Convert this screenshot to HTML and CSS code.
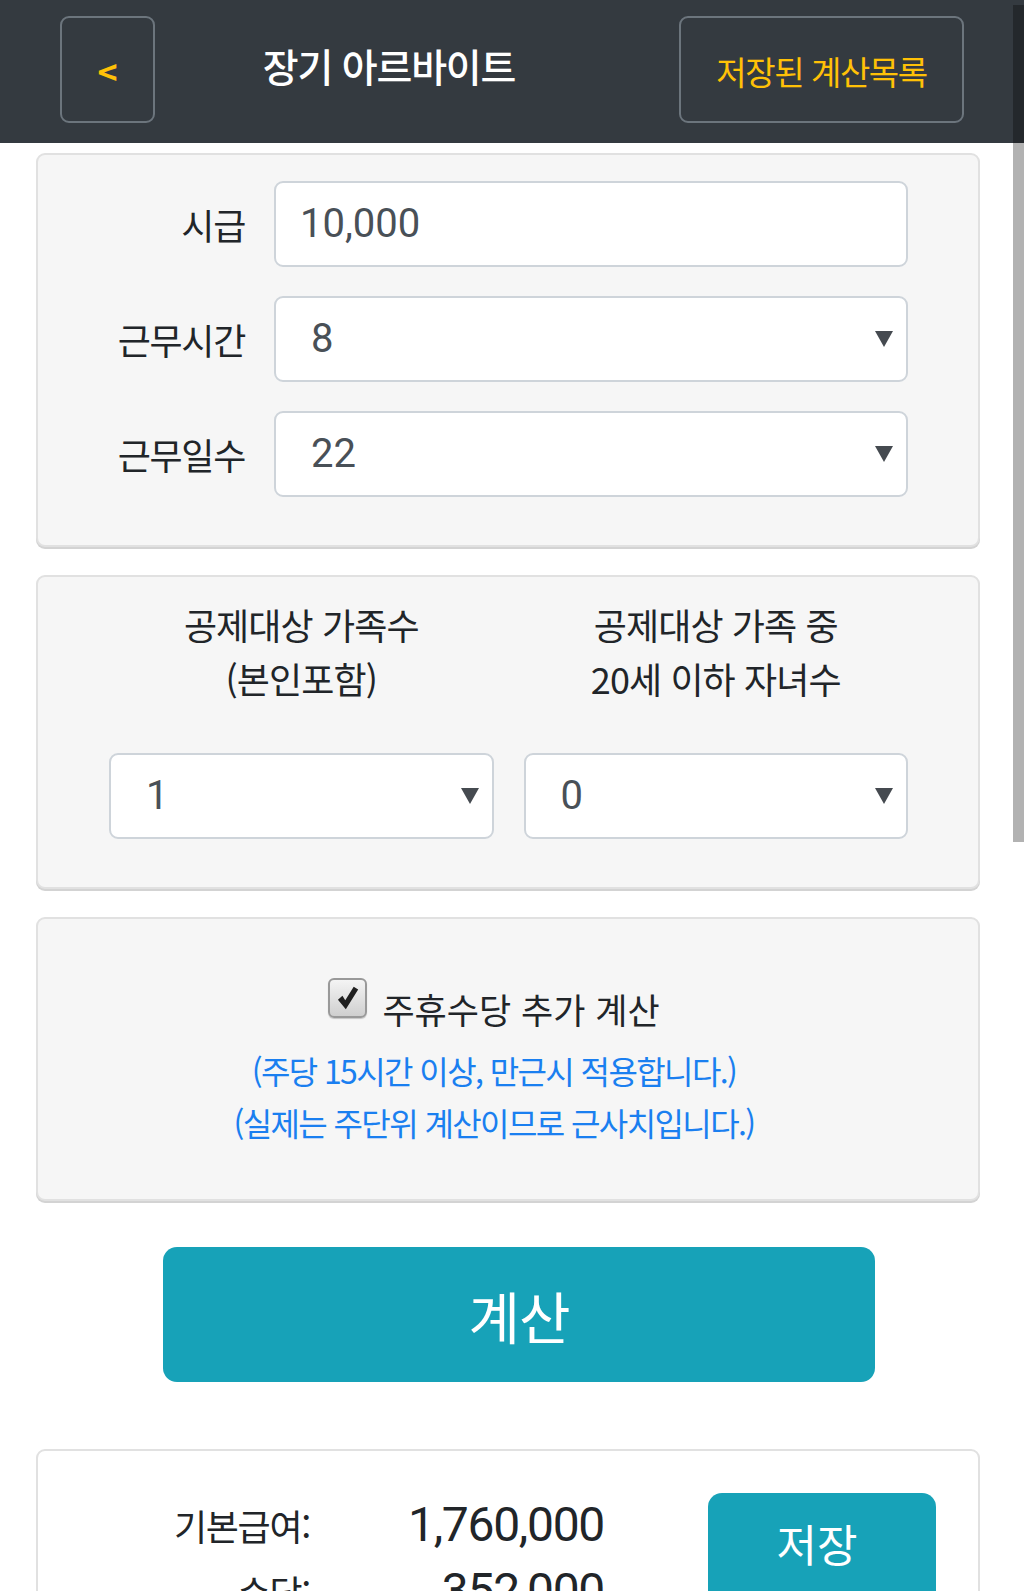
FILE: index.html
```html
<!DOCTYPE html>
<html lang="ko">
<head>
<meta charset="utf-8">
<title>장기 아르바이트</title>
<link rel="stylesheet" href="styles.css">
</head>
<body>
<header class="topbar">
  <div class="back-btn">&lt;</div>
  <h1 class="title">장기 아르바이트</h1>
  <div class="saved-btn">저장된 계산목록</div>
</header>

<main class="content">
  <section class="card card-form">
    <div class="form-row">
      <div class="form-label">시급</div>
      <div class="field field-input">10,000</div>
    </div>
    <div class="form-row">
      <div class="form-label">근무시간</div>
      <div class="field field-select"><span>8</span><svg class="caret" viewBox="0 0 18 16"><polygon points="0,0 18,0 9,16"/></svg></div>
    </div>
    <div class="form-row">
      <div class="form-label">근무일수</div>
      <div class="field field-select"><span>22</span><svg class="caret" viewBox="0 0 18 16"><polygon points="0,0 18,0 9,16"/></svg></div>
    </div>
  </section>

  <section class="card card-family">
    <div class="family-col">
      <div class="family-label">공제대상 가족수<br>(본인포함)</div>
      <div class="field field-select"><span>1</span><svg class="caret" viewBox="0 0 18 16"><polygon points="0,0 18,0 9,16"/></svg></div>
    </div>
    <div class="family-col">
      <div class="family-label">공제대상 가족 중<br>20세 이하 자녀수</div>
      <div class="field field-select"><span>0</span><svg class="caret" viewBox="0 0 18 16"><polygon points="0,0 18,0 9,16"/></svg></div>
    </div>
  </section>

  <section class="card card-holiday">
    <div class="check-row">
      <span class="checkbox"><svg viewBox="0 0 24 24"><path d="M3.5 13 L7.5 9.5 L10 13.5 L17.5 1.5 L21.5 4 L10.5 21.5 Z"/></svg></span>
      <span class="check-label">주휴수당 추가 계산</span>
    </div>
    <p class="note">(주당 15시간 이상, 만근시 적용합니다.)</p>
    <p class="note">(실제는 주단위 계산이므로 근사치입니다.)</p>
  </section>

  <div class="calc-btn">계산</div>

  <section class="card card-result">
    <div class="result-list">
      <div class="result-row">
        <div class="result-label">기본급여:</div>
        <div class="result-value">1,760,000</div>
      </div>
      <div class="result-row">
        <div class="result-label">수당:</div>
        <div class="result-value">352,000</div>
      </div>
    </div>
    <div class="save-btn">저장</div>
  </section>
</main>

<div class="scrollbar"></div>
</body>
</html>
```

FILE: styles.css
```css
* {
  box-sizing: border-box;
}

html,
body {
  margin: 0;
  padding: 0;
}

body {
  width: 1024px;
  height: 1591px;
  overflow: hidden;
  position: relative;
  background: #ffffff;
  color: #212529;
  font-family: Roboto, "Noto Sans CJK KR", sans-serif;
}

/* ---------- header ---------- */
.topbar {
  display: flex;
  align-items: flex-start;
  height: 143px;
  padding: 16px 60px 0;
  background: #343a40;
}

.back-btn {
  display: flex;
  align-items: center;
  justify-content: center;
  width: 95px;
  height: 107px;
  border: 2px solid #6c757d;
  border-radius: 9px;
  color: #ffc107;
  font: 700 34px/1 "Noto Sans CJK KR", sans-serif;
  padding-top: 2px;
}

.title {
  width: 468px;
  margin: 0;
  text-align: center;
  color: #ffffff;
  font: 500 39px/98px "Noto Sans CJK KR", sans-serif;
  letter-spacing: -1.2px;
}

.saved-btn {
  display: flex;
  align-items: center;
  justify-content: center;
  margin-left: auto;
  width: 285px;
  height: 107px;
  padding-top: 4px;
  border: 2px solid #6c757d;
  border-radius: 9px;
  color: #ffc107;
  font: 400 33px/1 "Noto Sans CJK KR", sans-serif;
  letter-spacing: -1.4px;
}

/* ---------- layout ---------- */
.content {
  padding: 10px 44px 0 36px;
}

.card {
  background: #f6f6f6;
  border: 2px solid #e1e1e1;
  border-radius: 9px;
  box-shadow: 0 2px 0 #d3d3d3;
  margin-bottom: 28px;
}

/* ---------- fields ---------- */
.field {
  display: flex;
  align-items: center;
  justify-content: space-between;
  height: 86px;
  background: #ffffff;
  border: 2px solid #ced4da;
  border-radius: 9px;
  color: #495057;
  font: 400 40px/1 Roboto, "Noto Sans CJK KR", sans-serif;
}

.field-input {
  padding: 0 13px 0 24px;
}

.field-select {
  padding: 0 13px 0 35px;
}

.caret {
  width: 18px;
  height: 16px;
  fill: #454a50;
}

/* ---------- card 1 ---------- */
.card-form {
  display: flex;
  flex-direction: column;
  gap: 29px;
  padding: 26px 70px 48px 71px;
}

.form-row {
  display: grid;
  grid-template-columns: 136px 634px;
  column-gap: 29px;
  align-items: center;
}

.form-label {
  text-align: right;
  padding-right: 0;
  font: 400 36px/1 "Noto Sans CJK KR", sans-serif;
  letter-spacing: -1.3px;
  color: #212529;
}

/* ---------- card 2 ---------- */
.card-family {
  display: grid;
  grid-template-columns: 1fr 1fr;
  column-gap: 30px;
  padding: 20px 70px 48px 71px;
}

.family-col {
  display: flex;
  flex-direction: column;
}

.family-label {
  margin-bottom: 48px;
  text-align: center;
  font: 400 36px/54px "Noto Sans CJK KR", sans-serif;
  letter-spacing: -0.9px;
}

/* ---------- card 3 ---------- */
.card-holiday {
  padding: 56px 28px 51px 0;
  text-align: center;
}

.check-row {
  display: flex;
  justify-content: center;
  align-items: flex-start;
  gap: 15px;
  height: 56px;
}

.checkbox {
  display: flex;
  align-items: center;
  justify-content: center;
  width: 39px;
  height: 40px;
  margin-top: 3px;
  border: 2px solid #999999;
  border-radius: 6px;
  background: linear-gradient(#f4f4f4, #cfcfcf);
  box-shadow: 0 1px 1px rgba(0, 0, 0, 0.2);
}

.checkbox svg {
  width: 27px;
  height: 29px;
  fill: #1f1f1f;
}

.check-label {
  padding-top: 6px;
  font: 400 35px/56px "Noto Sans CJK KR", sans-serif;
  letter-spacing: 0;
  color: #212529;
}

.note {
  margin: 0;
  color: #1a7ff0;
  font: 400 32px/52px "Noto Sans CJK KR", sans-serif;
  letter-spacing: -1.6px;
}

.check-row + .note {
  margin-top: 13px;
}

/* ---------- calc button ---------- */
.calc-btn {
  width: 712px;
  height: 135px;
  margin: 46px 0 67px 127px;
  border-radius: 14px;
  background: #17a2b8;
  color: #ffffff;
  text-align: center;
  font: 400 56px/135px "Noto Sans CJK KR", sans-serif;
  letter-spacing: -1px;
}

/* ---------- result card ---------- */
.card-result {
  display: flex;
  align-items: flex-start;
  height: 400px;
  padding-top: 41px;
  background: #ffffff;
}

.result-list {
  display: flex;
  flex-direction: column;
}

.result-row {
  display: grid;
  grid-template-columns: 275px 291px;
  height: 66px;
  align-items: center;
}

.result-label {
  text-align: right;
  padding-right: 3px;
  font: 400 36px/1 "Noto Sans CJK KR", sans-serif;
  letter-spacing: -1.3px;
  color: #212529;
}

.result-value {
  text-align: right;
  padding-right: 0;
  font: 400 48px/1 Roboto, sans-serif;
  letter-spacing: -1.3px;
  color: #212529;
}

.save-btn {
  width: 228px;
  height: 160px;
  margin: 1px 0 0 104px;
  padding-right: 10px;
  border-radius: 14px;
  background: #17a2b8;
  color: #ffffff;
  text-align: center;
  font: 400 44px/100px "Noto Sans CJK KR", sans-serif;
  letter-spacing: 0;
}

/* overlay scrollbar */
.scrollbar {
  position: absolute;
  top: 5px;
  right: 0;
  width: 11px;
  height: 837px;
  background: rgba(0, 0, 0, 0.3);
}
```
